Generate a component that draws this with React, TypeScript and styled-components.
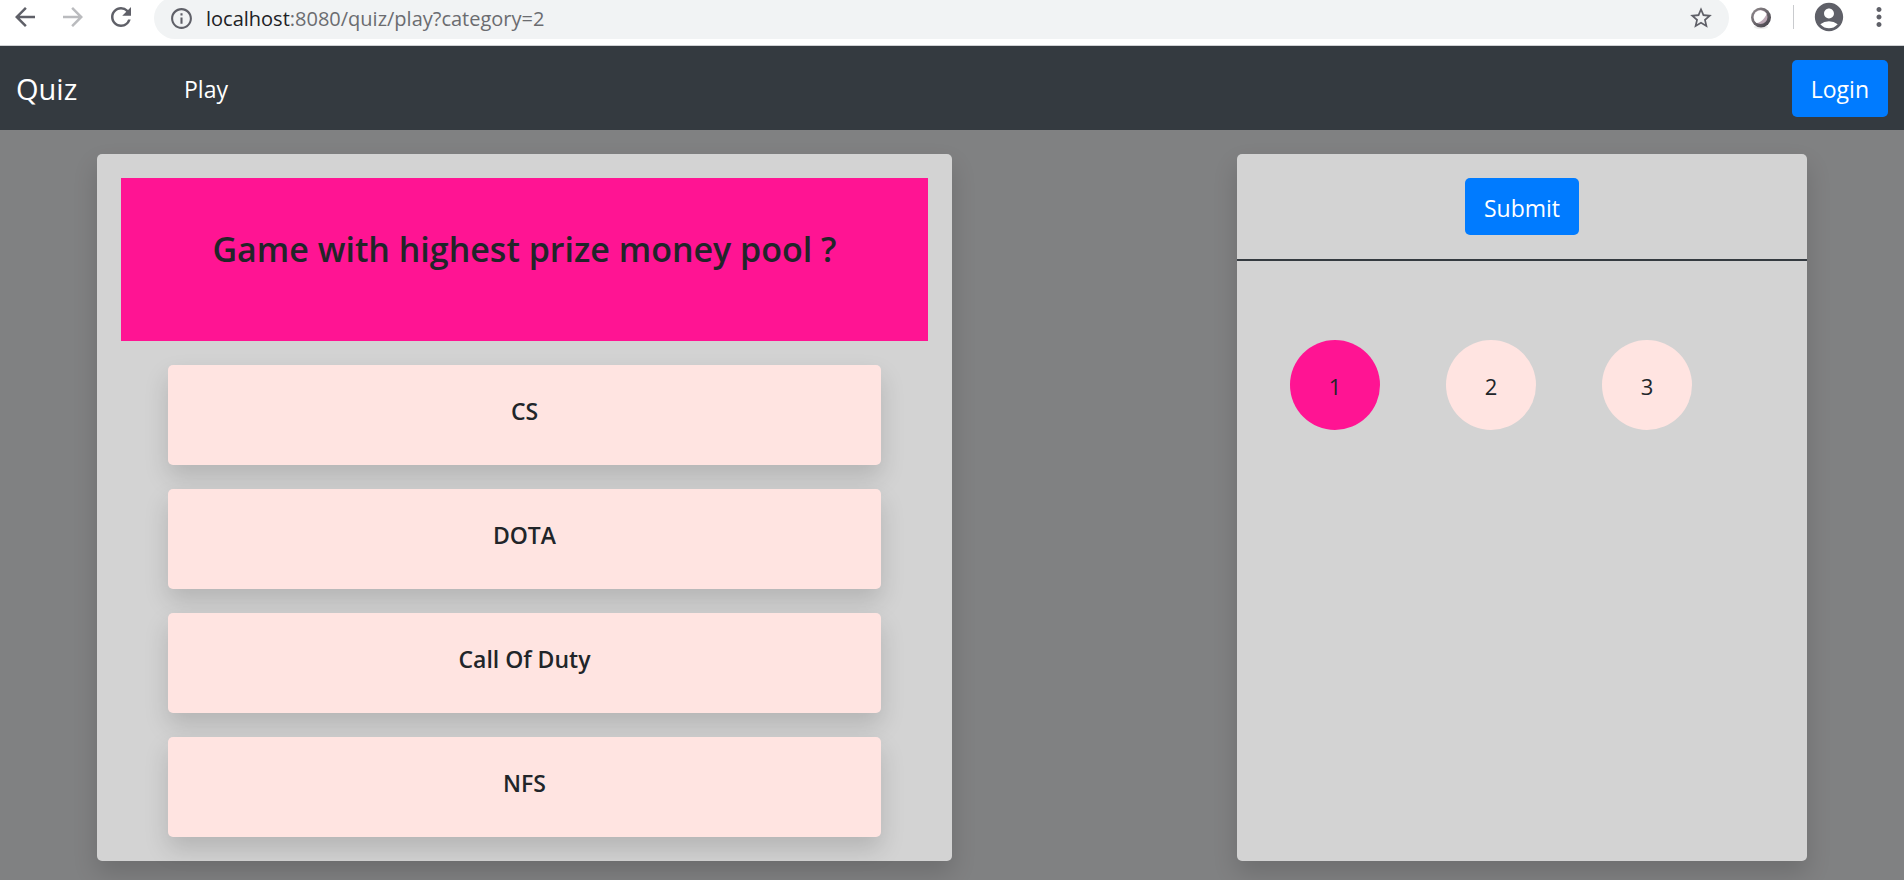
import React, { useState } from "react";
import styled, { createGlobalStyle } from "styled-components";
import {
  MdArrowBack,
  MdArrowForward,
  MdRefresh,
  MdInfoOutline,
  MdStarBorder,
  MdAccountCircle,
  MdMoreVert,
} from "react-icons/md";

const GlobalStyle = createGlobalStyle`
  *, *::before, *::after { box-sizing: border-box; }
  html, body { margin: 0; padding: 0; }
  body {
    background: #808182;
    color: #212529;
    font-family: "Open Sans", "Noto Sans", sans-serif;
    font-size: 24px;
    line-height: 36px;
  }
`;

const Screen = styled.div`
  display: flex;
  flex-direction: column;
  min-height: 100vh;
`;

const BrowserBar = styled.header`
  display: flex;
  align-items: flex-end;
  height: 46px;
  padding: 0 10px 6px;
  background: #fff;
  border-bottom: 1px solid #d0d2d5;
  overflow: hidden;
`;

const ToolGroup = styled.div`
  display: flex;
  flex: none;
  align-items: center;
  gap: 18px;
  height: 44px;
`;

const IconButton = styled.button<{ $muted?: boolean }>`
  display: flex;
  flex: none;
  align-items: center;
  justify-content: center;
  padding: 0;
  border: 0;
  background: none;
  color: ${(p) => (p.$muted ? "#babbbe" : "#5f6068")};
`;

const AddressBar = styled.div`
  display: flex;
  flex: 1;
  align-items: center;
  gap: 12px;
  height: 42px;
  margin: 0 18px;
  padding: 0 15px;
  border-radius: 21px;
  background: #f1f3f4;
`;

const Address = styled.div`
  flex: 1;
  padding-top: 2px;
  font-size: 20px;
  line-height: 28px;
  color: #6b6c70;
`;

const Host = styled.span`
  color: #202124;
`;

const Divider = styled.span`
  width: 1px;
  height: 24px;
  background: #c9cbce;
`;

const NavBar = styled.nav`
  display: flex;
  align-items: center;
  height: 84px;
  padding: 0 16px;
  background: #343a40;
`;

const Brand = styled.a`
  width: 168px;
  padding-top: 2px;
  color: #fff;
  font-size: 29px;
  text-decoration: none;
`;

const NavLink = styled.a`
  margin-right: auto;
  padding-top: 2px;
  color: #fff;
  font-size: 23px;
  text-decoration: none;
`;

const PrimaryButton = styled.button`
  height: 57px;
  padding: 2px 19px 0;
  border: 0;
  border-radius: 5px;
  background: #007bff;
  color: #fff;
  font: inherit;
  font-size: 23px;
`;

const Main = styled.main`
  display: grid;
  flex: 1;
  grid-template-columns: 3fr 1fr 2fr;
  padding: 24px 97px 19px;
`;

const Card = styled.section`
  border-radius: 5px;
  background: #d3d3d3;
  box-shadow: 0 12px 24px rgba(0, 0, 0, 0.15);
`;

const QuestionCard = styled(Card)`
  padding: 24px;
`;

const Question = styled.h1`
  margin: 0 0 24px;
  padding: 50px 24px 70px;
  background: #ff1493;
  font-size: 34px;
  font-weight: 600;
  line-height: 43px;
  text-align: center;
`;

const Options = styled.div`
  display: flex;
  flex-direction: column;
  gap: 24px;
  padding: 0 47px;
`;

const Option = styled.button`
  height: 100px;
  padding: 0 24px 8px;
  border: 0;
  border-radius: 5px;
  background: #ffe4e1;
  box-shadow: 0 12px 24px rgba(0, 0, 0, 0.15);
  color: inherit;
  font: inherit;
  font-size: 23px;
  font-weight: 600;
`;

const OverviewCard = styled(Card)`
  grid-column: 3;
`;

const SubmitRow = styled.div`
  display: flex;
  justify-content: center;
  padding: 24px;
  border-bottom: 2px solid #343a40;
`;

const QuestionNumbers = styled.div`
  display: flex;
  flex-wrap: wrap;
  gap: 66px;
  padding: 79px 53px;
`;

const NumberButton = styled.button<{ $active: boolean }>`
  width: 90px;
  height: 90px;
  padding: 2px 0 0;
  border: 0;
  border-radius: 50%;
  background: ${(p) => (p.$active ? "#ff1493" : "#ffe4e1")};
  color: inherit;
  font: inherit;
  font-size: 22px;
`;

const OrbIcon = () => (
  <svg width="28" height="28" viewBox="0 0 28 28" aria-hidden="true">
    <defs>
      <linearGradient id="orb" x1="0" y1="0" x2="1" y2="1">
        <stop offset="0" stopColor="#958f92" />
        <stop offset="1" stopColor="#3f3c44" />
      </linearGradient>
    </defs>
    <ellipse cx="14" cy="24" rx="7" ry="2" fill="#ececec" />
    <circle cx="14" cy="14.5" r="10" fill="url(#orb)" />
    <circle cx="13.5" cy="14" r="7" fill="#bda9b6" />
    <path d="M19.5 10.5C18.5 15 14 19.5 9.500 20A7 7 0 1 1 19.500 10.500Z" fill="#fff" />
  </svg>
);

const options = ["CS", "DOTA", "Call Of Duty", "NFS"];
const numbers = [1, 2, 3];

export default function App() {
  const [current, setCurrent] = useState(1);
  return (
    <Screen>
      <GlobalStyle />
      <BrowserBar>
        <ToolGroup>
          <IconButton aria-label="Back"><MdArrowBack size={30} /></IconButton>
          <IconButton aria-label="Forward" $muted><MdArrowForward size={30} /></IconButton>
          <IconButton aria-label="Reload"><MdRefresh size={30} /></IconButton>
        </ToolGroup>
        <AddressBar>
          <IconButton aria-label="Site information"><MdInfoOutline size={25} /></IconButton>
          <Address>
            <Host>localhost</Host>:8080/quiz/play?category=2
          </Address>
          <IconButton aria-label="Bookmark"><MdStarBorder size={26} /></IconButton>
        </AddressBar>
        <ToolGroup>
          <IconButton aria-label="Extension"><OrbIcon /></IconButton>
          <Divider />
          <IconButton aria-label="Profile"><MdAccountCircle size={34} /></IconButton>
          <IconButton aria-label="Menu"><MdMoreVert size={30} /></IconButton>
        </ToolGroup>
      </BrowserBar>
      <NavBar>
        <Brand href="#">Quiz</Brand>
        <NavLink href="#play">Play</NavLink>
        <PrimaryButton type="button">Login</PrimaryButton>
      </NavBar>
      <Main>
        <QuestionCard>
          <Question>Game with highest prize money pool ?</Question>
          <Options>
            {options.map((option) => (
              <Option type="button" key={option}>{option}</Option>
            ))}
          </Options>
        </QuestionCard>
        <OverviewCard>
          <SubmitRow>
            <PrimaryButton type="submit">Submit</PrimaryButton>
          </SubmitRow>
          <QuestionNumbers>
            {numbers.map((n) => (
              <NumberButton type="button" key={n} $active={n === current} onClick={() => setCurrent(n)}>
                {n}
              </NumberButton>
            ))}
          </QuestionNumbers>
        </OverviewCard>
      </Main>
    </Screen>
  );
}
